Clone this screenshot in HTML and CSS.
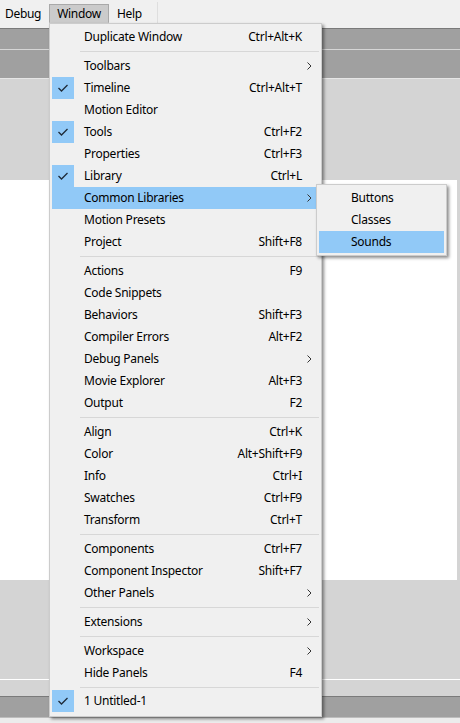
FILE: index.html
```html
<!DOCTYPE html>
<html>
<head>
<meta charset="utf-8">
<link rel="stylesheet" href="styles.css">
</head>
<body>
<div class="app">
  <div class="menubar">
    <span class="mb-item first">Debug</span>
    <span class="mb-item active">Window</span>
    <span class="mb-item">Help</span>
    <span class="mb-sep"></span>
  </div>
  <div class="band band-top"></div>
  <div class="band band-second"></div>
  <div class="gray-area upper"></div>
  <div class="stage-row">
    <div class="stage"></div>
    <div class="stage-gap"></div>
  </div>
  <div class="gray-area lower"></div>
  <div class="gray-area lowest"></div>
  <div class="band band-bottom"></div>
  <div class="statusbar"></div>
</div>

<div class="menu">
  <div class="item"><span class="icon"></span><span class="label">Duplicate Window</span><span class="key">Ctrl+Alt+K</span><span class="sub"></span></div>
  <div class="sep"></div>
  <div class="item"><span class="icon"></span><span class="label">Toolbars</span><span class="sub"><svg width="5" height="8" viewBox="0 0 5 8"><polyline points="0.5,0.5 4,4 0.5,7.5" fill="none" stroke="#333" stroke-width="1"/></svg></span></div>
  <div class="item"><span class="icon checked"><svg width="22" height="22" viewBox="0 0 22 22"><polyline points="6.5,11 9.5,14 15.5,8" fill="none" stroke="#1e2a38" stroke-width="1.3"/></svg></span><span class="label">Timeline</span><span class="key">Ctrl+Alt+T</span><span class="sub"></span></div>
  <div class="item"><span class="icon"></span><span class="label">Motion Editor</span><span class="sub"></span></div>
  <div class="item"><span class="icon checked"><svg width="22" height="22" viewBox="0 0 22 22"><polyline points="6.5,11 9.5,14 15.5,8" fill="none" stroke="#1e2a38" stroke-width="1.3"/></svg></span><span class="label">Tools</span><span class="key">Ctrl+F2</span><span class="sub"></span></div>
  <div class="item"><span class="icon"></span><span class="label">Properties</span><span class="key">Ctrl+F3</span><span class="sub"></span></div>
  <div class="item"><span class="icon checked"><svg width="22" height="22" viewBox="0 0 22 22"><polyline points="6.5,11 9.5,14 15.5,8" fill="none" stroke="#1e2a38" stroke-width="1.3"/></svg></span><span class="label">Library</span><span class="key">Ctrl+L</span><span class="sub"></span></div>
  <div class="item hover"><span class="icon"></span><span class="label">Common Libraries</span><span class="sub"><svg width="5" height="8" viewBox="0 0 5 8"><polyline points="0.5,0.5 4,4 0.5,7.5" fill="none" stroke="#333" stroke-width="1"/></svg></span></div>
  <div class="item"><span class="icon"></span><span class="label">Motion Presets</span><span class="sub"></span></div>
  <div class="item"><span class="icon"></span><span class="label">Project</span><span class="key">Shift+F8</span><span class="sub"></span></div>
  <div class="sep"></div>
  <div class="item"><span class="icon"></span><span class="label">Actions</span><span class="key">F9</span><span class="sub"></span></div>
  <div class="item"><span class="icon"></span><span class="label">Code Snippets</span><span class="sub"></span></div>
  <div class="item"><span class="icon"></span><span class="label">Behaviors</span><span class="key">Shift+F3</span><span class="sub"></span></div>
  <div class="item"><span class="icon"></span><span class="label">Compiler Errors</span><span class="key">Alt+F2</span><span class="sub"></span></div>
  <div class="item"><span class="icon"></span><span class="label">Debug Panels</span><span class="sub"><svg width="5" height="8" viewBox="0 0 5 8"><polyline points="0.5,0.5 4,4 0.5,7.5" fill="none" stroke="#333" stroke-width="1"/></svg></span></div>
  <div class="item"><span class="icon"></span><span class="label">Movie Explorer</span><span class="key">Alt+F3</span><span class="sub"></span></div>
  <div class="item"><span class="icon"></span><span class="label">Output</span><span class="key">F2</span><span class="sub"></span></div>
  <div class="sep"></div>
  <div class="item"><span class="icon"></span><span class="label">Align</span><span class="key">Ctrl+K</span><span class="sub"></span></div>
  <div class="item"><span class="icon"></span><span class="label">Color</span><span class="key">Alt+Shift+F9</span><span class="sub"></span></div>
  <div class="item"><span class="icon"></span><span class="label">Info</span><span class="key">Ctrl+I</span><span class="sub"></span></div>
  <div class="item"><span class="icon"></span><span class="label">Swatches</span><span class="key">Ctrl+F9</span><span class="sub"></span></div>
  <div class="item"><span class="icon"></span><span class="label">Transform</span><span class="key">Ctrl+T</span><span class="sub"></span></div>
  <div class="sep"></div>
  <div class="item"><span class="icon"></span><span class="label">Components</span><span class="key">Ctrl+F7</span><span class="sub"></span></div>
  <div class="item"><span class="icon"></span><span class="label">Component Inspector</span><span class="key">Shift+F7</span><span class="sub"></span></div>
  <div class="item"><span class="icon"></span><span class="label">Other Panels</span><span class="sub"><svg width="5" height="8" viewBox="0 0 5 8"><polyline points="0.5,0.5 4,4 0.5,7.5" fill="none" stroke="#333" stroke-width="1"/></svg></span></div>
  <div class="sep"></div>
  <div class="item"><span class="icon"></span><span class="label">Extensions</span><span class="sub"><svg width="5" height="8" viewBox="0 0 5 8"><polyline points="0.5,0.5 4,4 0.5,7.5" fill="none" stroke="#333" stroke-width="1"/></svg></span></div>
  <div class="sep"></div>
  <div class="item"><span class="icon"></span><span class="label">Workspace</span><span class="sub"><svg width="5" height="8" viewBox="0 0 5 8"><polyline points="0.5,0.5 4,4 0.5,7.5" fill="none" stroke="#333" stroke-width="1"/></svg></span></div>
  <div class="item"><span class="icon"></span><span class="label">Hide Panels</span><span class="key">F4</span><span class="sub"></span></div>
  <div class="sep last"></div>
  <div class="item"><span class="icon checked"><svg width="22" height="22" viewBox="0 0 22 22"><polyline points="6.5,11 9.5,14 15.5,8" fill="none" stroke="#1e2a38" stroke-width="1.3"/></svg></span><span class="label">1 Untitled-1</span><span class="sub"></span></div>
</div>

<div class="submenu">
  <div class="item"><span class="icon"></span><span class="label">Buttons</span></div>
  <div class="item"><span class="icon"></span><span class="label">Classes</span></div>
  <div class="item hover"><span class="icon"></span><span class="label">Sounds</span></div>
</div>
</body>
</html>
```

FILE: styles.css
```css
html, body {
  margin: 0;
  padding: 0;
}
body {
  width: 460px;
  height: 723px;
  overflow: hidden;
  font-family: "Noto Sans", "Open Sans", sans-serif;
  font-size: 12px;
  color: #000;
  background: #d4d4d4;
}
.app {
  display: flex;
  flex-direction: column;
  height: 723px;
}
.menubar {
  height: 28px;
  background: #f0f0f0;
  display: flex;
  align-items: flex-start;
  box-sizing: border-box;
  padding-top: 4px;
}
.mb-item {
  height: 19px;
  line-height: 17px;
  padding: 0 7px;
  border: 1px solid transparent;
  box-sizing: border-box;
  letter-spacing: -0.3px;
}
.mb-item.first {
  margin-left: -3px;
}
.mb-item.active {
  background: #cbcbcb;
  border-color: #a9a9a9;
  border-bottom-color: #cbcbcb;
}
.mb-sep {
  width: 1px;
  height: 24px;
  margin-top: -2px;
  margin-left: 7px;
  background: #dedede;
}
.band {
  background: #a0a0a0;
}
.band-top {
  height: 20px;
  border-top: 1px solid #7a7a7a;
  border-bottom: 1px solid #d6d6d6;
}
.band-second {
  height: 28px;
  border-bottom: 1px solid #e6e6e6;
}
.gray-area {
  background: #d4d4d4;
}
.gray-area.upper {
  height: 101px;
}
.stage-row {
  display: flex;
  height: 400px;
}
.stage {
  width: 457px;
  background: #ffffff;
}
.stage-gap {
  flex: 1;
  background: #d4d4d4;
}
.gray-area.lower {
  height: 99px;
  border-bottom: 1px solid #ffffff;
}
.gray-area.lowest {
  height: 16px;
}
.band-bottom {
  height: 20px;
  border-top: 1px solid #7a7a7a;
  border-bottom: 1px solid #bdbdbd;
}
.statusbar {
  flex: 1;
  background: #ececec;
}

/* dropdown menu */
.menu, .submenu {
  position: absolute;
  background: #f0f0f0;
  border: 1px solid #cccccc;
  box-shadow: 2px 2px 3px rgba(0, 0, 0, 0.45);
  box-sizing: border-box;
}
.menu {
  left: 49px;
  top: 23px;
  width: 273px;
  padding: 2px 0 3px;
}
.submenu {
  left: 316px;
  top: 184px;
  width: 131px;
  padding: 2px 0 2px;
}
.item {
  display: flex;
  align-items: center;
  height: 22px;
  margin: 0 2px;
  letter-spacing: -0.25px;
}
.item.hover {
  background: #91c9f7;
}
.icon {
  width: 22px;
  height: 22px;
  flex: none;
  display: flex;
}
.icon.checked {
  background: #91c9f7;
}
.label {
  margin-left: 10px;
  margin-bottom: 2px;
  white-space: nowrap;
}
.key {
  margin-left: auto;
  margin-bottom: 2px;
  white-space: nowrap;
}
.sub {
  width: 17px;
  flex: none;
  display: flex;
  align-items: center;
  padding-left: 5px;
  box-sizing: border-box;
  margin-left: auto;
}
.key + .sub {
  margin-left: 0;
}
.sep {
  height: 1px;
  margin: 3px 2px 3px 30px;
  background: #d7d7d7;
}
.sep.last {
  margin-bottom: 2px;
}
.menu {
  padding-bottom: 4px;
}
```
